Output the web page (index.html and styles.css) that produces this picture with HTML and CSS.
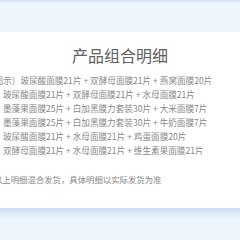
FILE: index.html
```html
<!DOCTYPE html>
<html lang="zh-CN">
<head>
    <meta charset="UTF-8">
    <meta name="viewport" content="width=device-width, initial-scale=1.0">
    <title>产品组合明细</title>
    <link rel="stylesheet" href="styles.css">
</head>
<body>

    <div class="band band-top"></div>

    <div class="panel">
        <h1>产品组合明细</h1>
        <ul class="combos">
            <li class="first">（图示）玻尿酸面膜21片 + 双酵母面膜21片 + 燕窝面膜20片</li>
            <li>玻尿酸面膜21片 + 双酵母面膜21片 + 水母面膜21片</li>
            <li>墨藻果面膜25片 + 白加黑膜力套装30片 + 大米面膜7片</li>
            <li>墨藻果面膜25片 + 白加黑膜力套装30片 + 牛奶面膜7片</li>
            <li>玻尿酸面膜21片 + 水母面膜21片 + 鸡蛋面膜20片</li>
            <li>双酵母面膜21片 + 水母面膜21片 + 维生素果面膜21片</li>
        </ul>
        <p class="note">以上明细混合发货，具体明细以实际发货为准</p>
    </div>

    <div class="band band-bottom"></div>

</body>
</html>
```

FILE: styles.css
```css
body { margin: 0; width: 240px; height: 240px; overflow: hidden; background-color: #eef6fd; font-family: "Noto Sans CJK SC", "Noto Sans", sans-serif; }
.band { height: 32px; }
.band-top { box-sizing: border-box; border-top: 2px solid #d5e6f4; background-color: #eef6fd; }
.band-bottom { background: linear-gradient(#c8ddf1, #dcebf8 6px, #eaf4fc 10px, #eef6fd 14px); }
.panel { height: 176px; background-color: #fff; overflow: hidden; }
h1 { margin: 13px 0 0; font-size: 16px; line-height: 20px; font-weight: normal; color: #606060; text-align: center; }
.combos { list-style: none; margin: 8px 0 0; padding: 0 0 0 3px; font-size: 8.6px; line-height: 14px; color: #888; white-space: nowrap; }
.combos .first { text-indent: -17px; }
.note { margin: 15px 0 0; padding-left: 3px; text-indent: -9px; font-size: 8.4px; line-height: 14px; color: #888; white-space: nowrap; }
```
